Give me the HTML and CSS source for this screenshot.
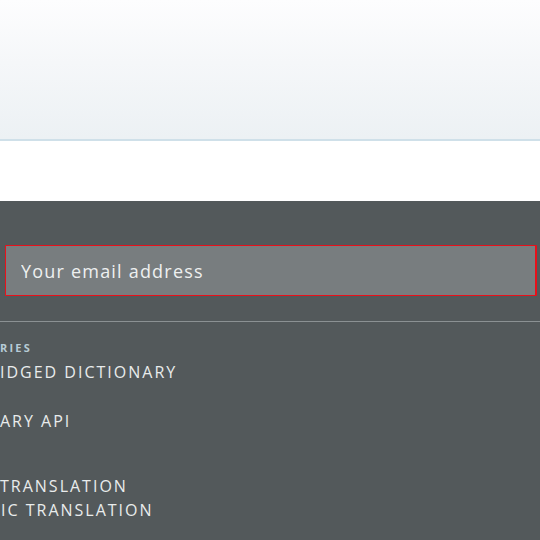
FILE: index.html
```html
<!DOCTYPE html>
<html lang="en">
<head>
<meta charset="utf-8">
<title>Footer</title>
<link rel="stylesheet" href="styles.css">
</head>
<body>
  <header class="hero"></header>
  <div class="spacer"></div>
  <footer class="footer">
    <form class="signup">
      <input class="email" type="email" placeholder="Your email address">
    </form>
    <hr class="rule">
    <nav class="links">
      <div class="group">
        <h4 class="group-title">RIES</h4>
        <ul class="list">
          <li class="item skip-after">IDGED DICTIONARY</li>
          <li class="item">ARY API</li>
        </ul>
      </div>
      <div class="group group-second">
        <ul class="list">
          <li class="item">TRANSLATION</li>
          <li class="item item-inset">IC TRANSLATION</li>
        </ul>
      </div>
    </nav>
  </footer>
</body>
</html>
```
FILE: styles.css
```css
html, body {
  margin: 0;
  padding: 0;
}
body {
  width: 540px;
  height: 540px;
  overflow: hidden;
  background: #ffffff;
  font-family: "Open Sans", "Noto Sans", sans-serif;
}
.hero {
  height: 139px;
  background: linear-gradient(to bottom, #fdfdfe 0%, #f5f7f9 45%, #ecf1f4 100%);
  border-bottom: 2px solid #cfe0e9;
}
.spacer {
  height: 60px;
}
.footer {
  background: #53595b;
  padding-top: 44px;
  min-height: 400px;
}
.signup {
  margin: 0;
  padding-left: 5px;
}
.email {
  display: block;
  box-sizing: border-box;
  width: 532px;
  height: 51px;
  margin: 0;
  border: 1px solid #e8101a;
  border-right-width: 2px;
  border-radius: 1px;
  background: #787d7f;
  padding: 0 0 0 15px;
  font-family: "Open Sans", "Noto Sans", sans-serif;
  font-size: 18px;
  letter-spacing: 1.2px;
  color: #f0f1f1;
  outline: none;
}
.email::placeholder {
  color: #eef0f0;
  opacity: 1;
}
.rule {
  margin: 25px 0 0;
  border: 0;
  height: 1px;
  background: #8b9193;
}
.links {
  padding-top: 18px;
}
.group-title {
  margin: 0;
  font-size: 11px;
  font-weight: 700;
  line-height: 16px;
  letter-spacing: 2.2px;
  color: #b7cbd6;
}
.list {
  list-style: none;
  margin: 4px 0 0;
  padding: 0;
}
.item {
  font-size: 16px;
  font-weight: 400;
  line-height: 24px;
  letter-spacing: 2px;
  color: #e9ecec;
}
.item-inset {
  padding-left: 1px;
}
.skip-after {
  margin-bottom: 25px;
}
.group-second .list {
  margin-top: 41px;
}
```
